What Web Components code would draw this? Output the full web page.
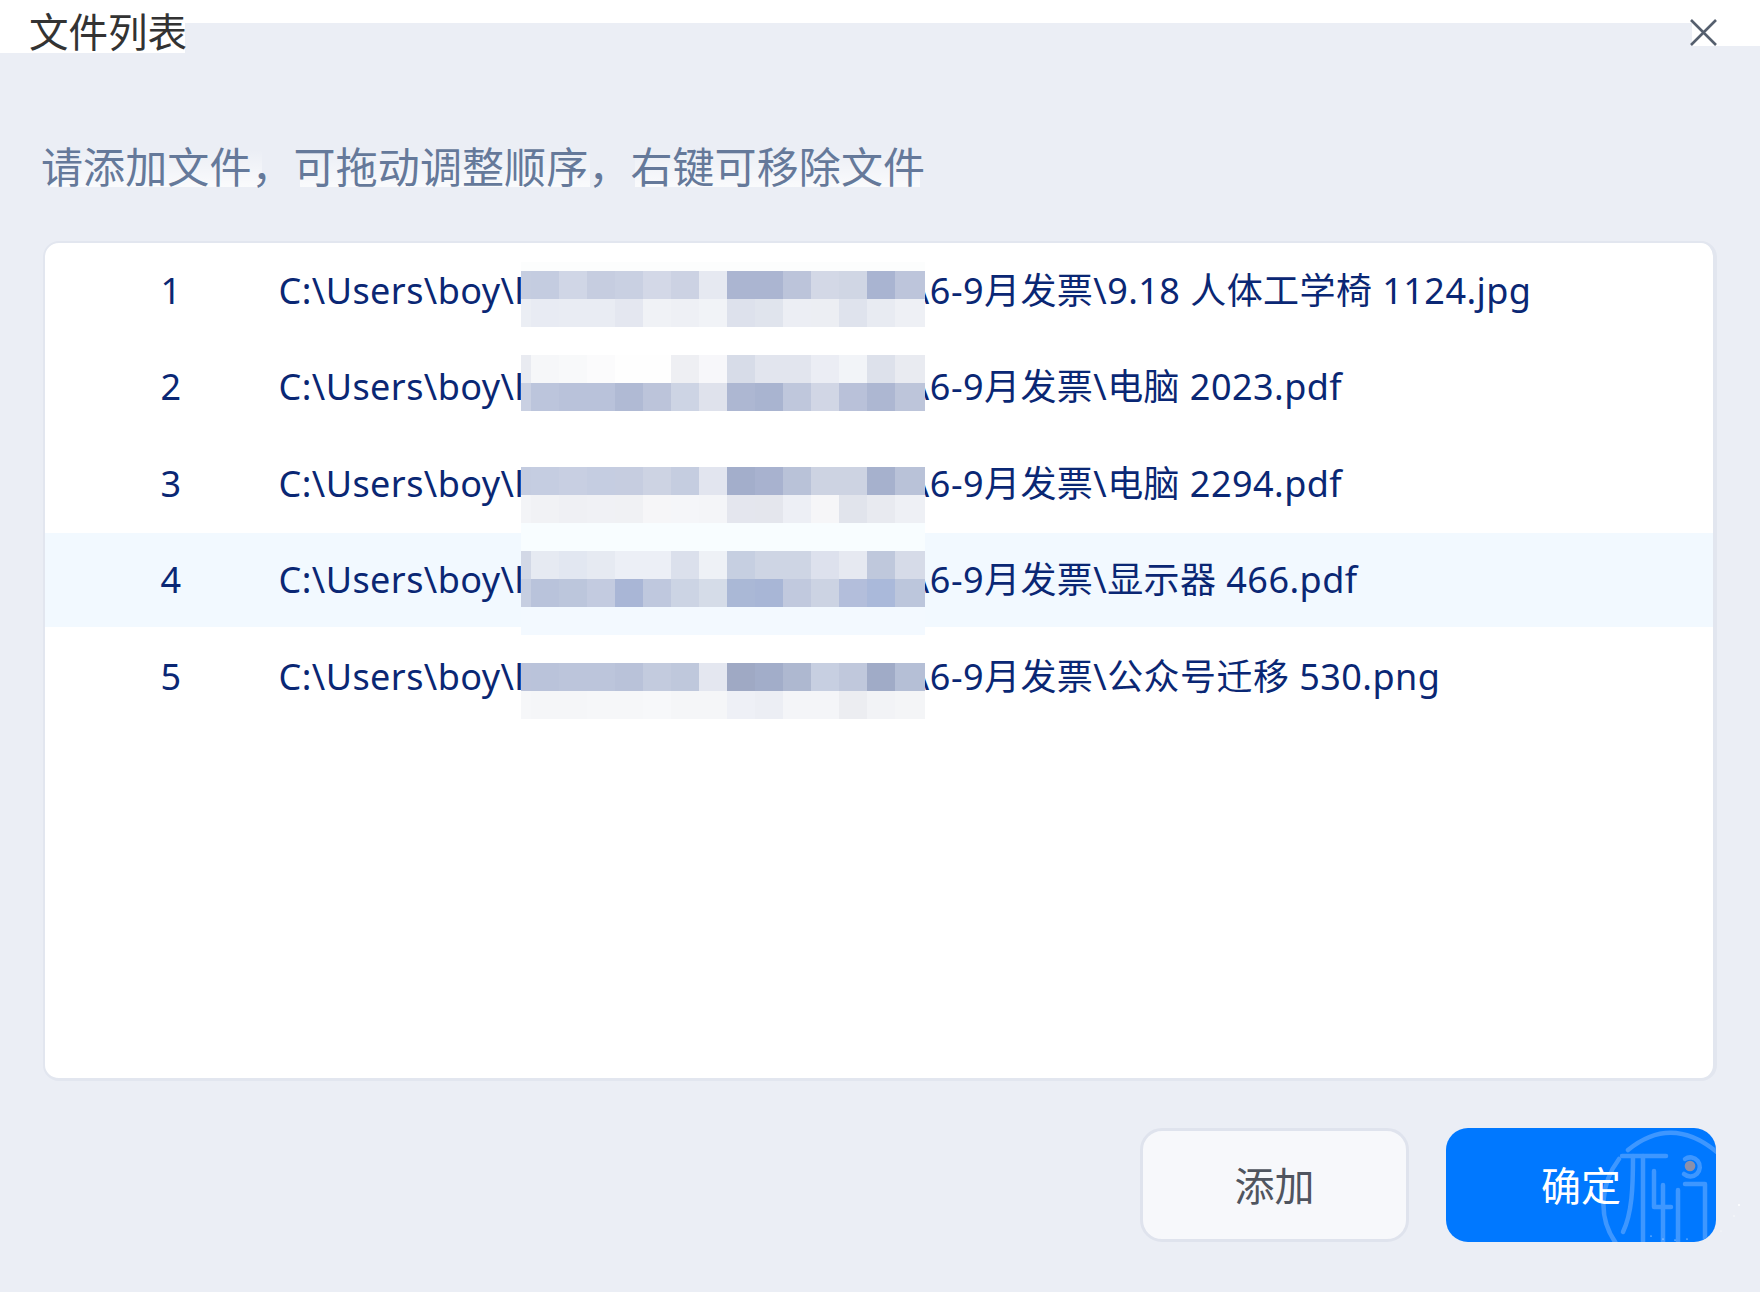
<!DOCTYPE html>
<html lang="zh">
<head>
<meta charset="utf-8">
<title>文件列表</title>
<style>
  html, body { margin: 0; background: #ebeef5; }
  body { font-family: "Noto Sans", "Noto Sans CJK SC", sans-serif; }
</style>
</head>
<body>
<file-dialog>
  <span slot="title">文件列表</span>
  <span slot="hint">请添加文件，可拖动调整顺序，右键可移除文件</span>
  <file-list>
    <file-row num="1" head="C:\Users\boy\l" tail="\6-9月发票\9.18 人体工学椅 1124.jpg">
      <mosaic-patch style="top:28px" lead="fcfdfd" lead-h="9"
        a="c5cde0 c4cce0 d0d6e6 c6cde0 c9d0e2 d3d8e7 ccd2e3 e6e9f1 abb5d1 abb5d1 bcc4da d3d8e6 d0d6e4 a9b4d1 bdc5db"
        b="ebeef4 e8ebf3 e9ecf3 e9ecf3 e4e7f0 f0f2f6 eef0f5 f1f3f7 dde1ec e0e4ed eceef4 eceef3 dfe3ed e8ebf2 eef0f5"></mosaic-patch>
    </file-row>
    <file-row num="2" head="C:\Users\boy\l" tail="\6-9月发票\电脑 2023.pdf">
      <mosaic-patch style="top:15px"
        a="e9ebf1 f6f7f9 f8f9fa fbfbfc fefefe fefefe eeeff3 f7f7fa d7dce8 e2e5ee e2e5ee ebedf4 f2f4f8 dde1eb e9ebf1"
        b="c9d0e2 bcc5dc b9c2da b9c2da b0bad4 bcc4da cdd4e4 dfe2ec adb7d2 a9b4d0 bfc7dc d1d6e5 b9c1d9 adb7d2 bdc5da"></mosaic-patch>
    </file-row>
    <file-row num="3" head="C:\Users\boy\l" tail="\6-9月发票\电脑 2294.pdf">
      <mosaic-patch style="top:31px"
        a="c4cce0 c5cde1 c8cfe2 c5cde1 c6cde0 cdd3e3 c5cde0 e2e5ef a3aecb a8b2cf b9c2d8 cdd3e2 cdd3e2 a6b1cd b9c2d8"
        b="f3f4f7 f1f2f5 eff0f4 f0f1f5 f0f1f4 f6f6f8 f5f6f9 f4f5f8 e4e6ee e4e6ed edeff5 f6f6f8 e1e4ec e8eaf0 eef0f5"></mosaic-patch>
    </file-row>
    <file-row active num="4" head="C:\Users\boy\l" tail="\6-9月发票\显示器 466.pdf">
      <mosaic-patch style="top:18px" lead="f8fdff" lead-h="28" trail="f3f9ff"
        a="d2d8e6 e6eaf2 e2e7f1 e6eaf2 eceff6 eceff6 dbe0ec eef1f6 c6cfe1 ced5e4 ced5e4 dde1ed e6e9f1 bfc8dc d6dbe8"
        b="c6cee1 b9c3db bcc6dc c3cbe0 a9b6d6 bfc8de ccd4e4 d5dce8 aab8d6 a8b6d6 c1c9de ccd3e3 b3bedb aab9da bcc6dc"></mosaic-patch>
    </file-row>
    <file-row num="5" head="C:\Users\boy\l" tail="\6-9月发票\公众号迁移 530.png">
      <mosaic-patch style="top:33px"
        a="bbc3da bac3da bcc5db bcc5db b9c2d9 c3cbde bfc8dc e4e7f0 9fa9c4 a2adc9 aeb8d0 c7cfe1 c0c8dc a0abc7 b5bfd6"
        b="f6f7f9 f5f6f8 f5f6f8 f6f7f9 f6f7f9 f7f8fa f5f6f8 f5f6f8 eef0f6 eceef4 f4f5f8 f4f5f8 ecedf1 f2f3f6 f4f5f7"></mosaic-patch>
    </file-row>
  </file-list>
  <action-button slot="actions">添加</action-button>
  <action-button slot="actions" primary>确定</action-button>
</file-dialog>

<script>
const BASE_FONT = '"Noto Sans", "Noto Sans CJK SC", sans-serif';
const HALO = "linear-gradient(rgba(255,255,255,0), rgba(255,255,255,.75))";

class FileDialog extends HTMLElement {
  constructor() {
    super();
    this.attachShadow({ mode: "open" });
    this.shadowRoot.innerHTML = `
      <style>
        :host { display: block; width: 1760px; height: 1292px; overflow: hidden; font-family: ${BASE_FONT}; }
        header {
          display: flex;
          justify-content: space-between;
          height: 53px;
          background: linear-gradient(#fff 23px, #ebeef5 23px);
        }
        .title {
          box-sizing: border-box;
          width: 185px;
          height: 53px;
          padding: 2px 0 0 29px;
          background: #fff;
          color: #333;
          font-size: 39.5px;
          line-height: 56px;
          font-family: "Noto Sans CJK SC", sans-serif;
          white-space: nowrap;
        }
        .close {
          box-sizing: border-box;
          width: 68px;
          height: 46px;
          padding-top: 19px;
          background: #fff;
        }
        .close svg { display: block; margin-left: -2px; }
        main { padding: 82px 43px 0; }
        .hint {
          height: 60px;
          margin-left: -2px;
          color: #65799a;
          font-size: 42px;
          letter-spacing: .1px;
          line-height: 60px;
          font-family: "Noto Sans CJK SC", sans-serif;
          white-space: nowrap;
          background:
            ${HALO} 9px 15px / 212px 37px no-repeat,
            ${HALO} 259px 15px / 290px 37px no-repeat,
            ${HALO} 594px 15px / 285px 37px no-repeat;
        }
        footer {
          display: flex;
          justify-content: flex-end;
          gap: 37px;
          margin: 47px 1px 0 0;
        }
        ::slotted(file-list) { margin-top: 46px; }
      </style>
      <header>
        <div class="title"><slot name="title"></slot></div>
        <div class="close">
          <svg width="27" height="27" viewBox="0 0 27 27" fill="none" stroke="#555f6e" stroke-width="2.6"><path d="M1 1 26 26M26 1 1 26"/></svg>
        </div>
      </header>
      <main>
        <div class="hint"><slot name="hint"></slot></div>
        <slot></slot>
        <footer><slot name="actions"></slot></footer>
      </main>
    `;
  }
}

class FileList extends HTMLElement {
  constructor() {
    super();
    this.attachShadow({ mode: "open" });
    this.shadowRoot.innerHTML = `
      <style>
        :host {
          display: flex;
          flex-direction: column;
          gap: 2.67px;
          box-sizing: border-box;
          height: 840px;
          background: #fff;
          border: solid #e2e6ef;
          border-width: 2px 4px 3px 2px;
          border-radius: 16px;
        }
      </style>
      <slot></slot>
    `;
  }
}

class FileRow extends HTMLElement {
  constructor() {
    super();
    this.attachShadow({ mode: "open" });
    this.shadowRoot.innerHTML = `
      <style>
        :host {
          display: flex;
          align-items: center;
          position: relative;
          height: 94px;
          color: #0a2774;
          font-size: 36px;
          line-height: 50px;
          letter-spacing: .45px;
          white-space: nowrap;
        }
        :host([active]) { background: #f2f9ff; }
        span { padding-top: 1px; }
        .num { width: 60px; margin: 0 77.5px 0 96px; text-align: center; }
        .head { flex: 0 0 242.5px; min-width: 0; }
        .patch { flex: 0 0 404px; align-self: stretch; position: relative; z-index: 1; padding: 0; }
        .tail { margin-left: -9px; }
      </style>
      <span class="num"></span>
      <span class="head"></span>
      <span class="patch"><slot></slot></span>
      <span class="tail"></span>
    `;
  }

  connectedCallback() {
    this.shadowRoot.querySelector(".num").textContent = this.getAttribute("num");
    this.shadowRoot.querySelector(".head").textContent = this.getAttribute("head");
    this.shadowRoot.querySelector(".tail").textContent = this.getAttribute("tail");
  }
}

class MosaicPatch extends HTMLElement {
  constructor() {
    super();
    this.attachShadow({ mode: "open" });
    this.shadowRoot.innerHTML = `
      <style>
        :host { display: block; position: absolute; left: 0; width: 404px; }
        .band { display: grid; grid-template-columns: 10px repeat(14, 28px) 2px; height: 28px; }
        .lead { position: absolute; left: 0; right: 0; }
        .trail { height: 28px; }
      </style>
      <div id="out"></div>
    `;
  }

  connectedCallback() {
    const out = this.shadowRoot.getElementById("out");
    const band = (colors) => {
      const row = document.createElement("div");
      row.className = "band";
      // last colour twice: the pixel column is cut off by the patch edge
      [...colors, colors[colors.length - 1]].forEach((c) => {
        const cell = document.createElement("i");
        cell.style.background = "#" + c;
        row.appendChild(cell);
      });
      return row;
    };
    if (this.hasAttribute("lead")) {
      const h = this.getAttribute("lead-h");
      const lead = document.createElement("div");
      lead.className = "lead";
      lead.style.cssText = `top:-${h}px;height:${h}px;background:#${this.getAttribute("lead")}`;
      out.appendChild(lead);
    }
    out.appendChild(band(this.getAttribute("a").split(" ")));
    out.appendChild(band(this.getAttribute("b").split(" ")));
    if (this.hasAttribute("trail")) {
      const trail = document.createElement("div");
      trail.className = "trail";
      trail.style.background = "#" + this.getAttribute("trail");
      out.appendChild(trail);
    }
  }
}

class ActionButton extends HTMLElement {
  constructor() {
    super();
    this.attachShadow({ mode: "open" });
    const art = this.hasAttribute("primary") ? `
      <div class="clip">
        <svg class="mark" width="270" height="114" viewBox="0 0 270 114" fill="none" stroke="#3e97ff" stroke-width="4.500" stroke-linecap="round" stroke-linejoin="round">
          <path d="M182 22Q226 -14 272 25"/>
          <path d="M173 31C155 55 150 90 172 118"/>
          <path d="M176 28H220"/>
          <path d="M187 28C187 60 186 85 177 104"/>
          <path d="M197 28V118"/>
          <path d="M208 43V79H225"/>
          <path d="M217 57V118"/>
          <path d="M232 62V118"/>
          <path d="M238 46A9.500 9.500 0 1 0 239 31"/>
          <path d="M239 56H259V118"/>
          <circle cx="244" cy="38" r="5.300" fill="#8b90ab" stroke="none"/>
        </svg>
      </div>
      <svg class="specks" width="100" height="40" viewBox="0 0 100 40" fill="#fff">
        <circle cx="96" cy="3" r="1"/><circle cx="91" cy="14" r=".7"/><circle cx="78" cy="29" r=".6"/>
        <circle cx="8" cy="34" r=".6"/><circle cx="20" cy="37" r=".6"/><circle cx="32" cy="38" r=".6"/><circle cx="44" cy="37" r=".6"/>
      </svg>` : "";
    this.shadowRoot.innerHTML = `
      <style>
        :host {
          display: flex;
          align-items: center;
          justify-content: center;
          position: relative;
          box-sizing: border-box;
          width: 269px;
          height: 114px;
          padding-bottom: 2px;
          background: #f7f8fb;
          border: 3px solid #dfe3ed;
          border-radius: 22px;
          color: #50555f;
          font-size: 40px;
          font-family: "Noto Sans CJK SC", sans-serif;
        }
        :host([primary]) {
          width: 270px;
          background: #0078ff;
          border: 0;
          color: #fff;
        }
        .clip { position: absolute; inset: 0; overflow: hidden; border-radius: 22px; }
        .mark { position: absolute; left: 0; top: 0; }
        .specks { position: absolute; left: 197px; top: 74px; }
        .label { position: relative; }
      </style>
      ${art}
      <span class="label"><slot></slot></span>
    `;
  }
}

customElements.define("file-dialog", FileDialog);
customElements.define("file-list", FileList);
customElements.define("file-row", FileRow);
customElements.define("mosaic-patch", MosaicPatch);
customElements.define("action-button", ActionButton);
</script>
</body>
</html>
